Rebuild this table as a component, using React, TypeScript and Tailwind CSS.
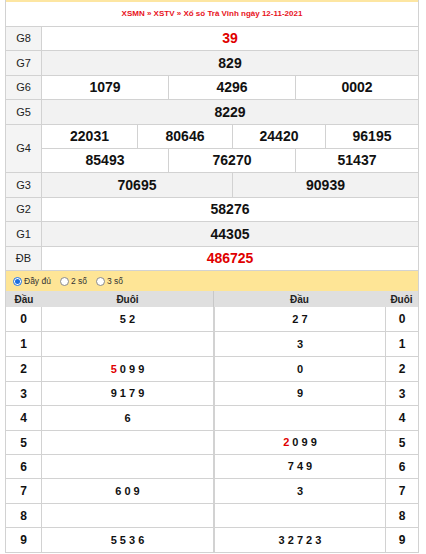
const rows: { label: string; h: string; gray: boolean; cols: string; nums: string[]; red?: boolean }[] = [
  { label: 'G8', h: 'h-[24px]', gray: false, cols: 'grid-cols-1', nums: ['39'], red: true },
  { label: 'G7', h: 'h-[25px]', gray: true, cols: 'grid-cols-1', nums: ['829'] },
  { label: 'G6', h: 'h-[24px]', gray: false, cols: 'grid-cols-[127px_127px_1fr]', nums: ['1079', '4296', '0002'] },
  { label: 'G5', h: 'h-[25px]', gray: true, cols: 'grid-cols-1', nums: ['8229'] },
];

const rowsBottom: { label: string; h: string; gray: boolean; cols: string; nums: string[]; red?: boolean }[] = [
  { label: 'G3', h: 'h-[25px]', gray: true, cols: 'grid-cols-[191px_1fr]', nums: ['70695', '90939'] },
  { label: 'G2', h: 'h-[24px]', gray: false, cols: 'grid-cols-1', nums: ['58276'] },
  { label: 'G1', h: 'h-[25px]', gray: true, cols: 'grid-cols-1', nums: ['44305'] },
  { label: 'ĐB', h: 'h-[24px]', gray: false, cols: 'grid-cols-1', nums: ['486725'], red: true },
];

// loto: [đầu -> đuôi], [đuôi -> đầu]; first digit red where marked
const loto: { h: string; left: string; leftRed?: string; right: string; rightRed?: string }[] = [
  { h: 'h-[25px]', left: '5 2', right: '2 7' },
  { h: 'h-[25px]', left: '', right: '3' },
  { h: 'h-[25px]', left: ' 0 9 9', leftRed: '5', right: '0' },
  { h: 'h-[24px]', left: '9 1 7 9', right: '9' },
  { h: 'h-[25px]', left: '6', right: '' },
  { h: 'h-[24px]', left: '', right: ' 0 9 9', rightRed: '2' },
  { h: 'h-[24px]', left: '', right: '7 4 9' },
  { h: 'h-[25px]', left: '6 0 9', right: '3' },
  { h: 'h-[24px]', left: '', right: '' },
  { h: 'h-[25px]', left: '5 5 3 6', right: '3 2 7 2 3' },
];

type Row = (typeof rows)[number];

const PrizeRow = ({ r }: { r: Row }) => (
  <div className={`flex ${r.h} border-b border-[#d2d2d2] ${r.gray ? 'bg-[#f2f2f2]' : 'bg-white'}`}>
    <div className="w-[36px] shrink-0 border-r border-[#d2d2d2] bg-[#f4f4f4] flex items-center justify-center text-[11px] text-[#222]">
      {r.label}
    </div>
    <div className={`flex-1 grid ${r.cols}`}>
      {r.nums.map((n, i) => (
        <div
          key={n}
          className={`flex items-center justify-center text-[14px] font-bold ${r.red ? 'text-[#e00000]' : 'text-[#111]'} ${
            i < r.nums.length - 1 ? 'border-r border-[#d2d2d2]' : ''
          }`}
        >
          {n}
        </div>
      ))}
    </div>
  </div>
);

const Radio = ({ on, label }: { on?: boolean; label: string }) => (
  <label className="flex items-center gap-[2px] mr-[9px]">
    <span
      className={`w-[9px] h-[9px] rounded-full border flex items-center justify-center bg-white ${
        on ? 'border-[#1c6fe0]' : 'border-[#8a8a8a]'
      }`}
    >
      {on && <span className="w-[5px] h-[5px] rounded-full bg-[#1c6fe0]" />}
    </span>
    <span className="text-[8.5px] text-[#333]">{label}</span>
  </label>
);

export default function App() {
  return (
    <div className="bg-white min-h-[554px]" style={{ fontFamily: '"Liberation Sans", Arial, sans-serif' }}>
      <div className="ml-[5px] w-[414px] border-x border-[#d2d2d2]">
        {/* title */}
        <div className="h-[27px] border-t-2 border-t-[#fde6a2] border-b border-[#d2d2d2] flex items-center justify-center">
          <span className="text-[8px] font-bold text-[#e8121c]">XSMN » XSTV » Xổ số Trà Vinh ngày 12-11-2021</span>
        </div>

        {rows.map((r) => (
          <PrizeRow key={r.label} r={r} />
        ))}

        {/* G4 */}
        <div className="flex h-[48px] bg-white">
          <div className="w-[36px] shrink-0 border-r border-b border-[#d2d2d2] bg-[#f4f4f4] flex items-center justify-center text-[11px] text-[#222]">
            G4
          </div>
          <div className="flex-1 flex flex-col">
            <div className="h-[24px] grid grid-cols-[96px_95px_93px_1fr] border-b border-[#d2d2d2]">
              {['22031', '80646', '24420', '96195'].map((n, i) => (
                <div key={n} className={`flex items-center justify-center text-[14px] font-bold text-[#111] ${i < 3 ? 'border-r border-[#d2d2d2]' : ''}`}>
                  {n}
                </div>
              ))}
            </div>
            <div className="h-[24px] grid grid-cols-[127px_127px_1fr] border-b border-[#d2d2d2]">
              {['85493', '76270', '51437'].map((n, i) => (
                <div key={n} className={`flex items-center justify-center text-[14px] font-bold text-[#111] ${i < 2 ? 'border-r border-[#d2d2d2]' : ''}`}>
                  {n}
                </div>
              ))}
            </div>
          </div>
        </div>

        {rowsBottom.map((r) => (
          <PrizeRow key={r.label} r={r} />
        ))}

        {/* options */}
        <div className="h-[20px] bg-[#fee596] flex items-center pl-[7px]">
          <Radio on label="Đầy đủ" />
          <Radio label="2 số" />
          <Radio label="3 số" />
        </div>

        {/* loto header */}
        <div className="h-[16px] bg-[#dfdfdf] flex text-[10px] font-bold text-[#222]">
          <div className="w-[208px] flex border-r border-[#c8c8c8]">
            <div className="w-[36px] flex items-center justify-center">Đầu</div>
            <div className="flex-1 flex items-center justify-center">Đuôi</div>
          </div>
          <div className="flex-1 flex">
            <div className="w-[171px] flex items-center justify-center">Đầu</div>
            <div className="flex-1 flex items-center justify-center">Đuôi</div>
          </div>
        </div>

        {loto.map((r, i) => (
          <div key={i} className={`flex ${r.h} text-[11px] font-bold text-[#111]`}>
            <div className="w-[208px] flex border-r border-b border-[#d2d2d2]">
              <div className="w-[36px] border-r border-[#d2d2d2] flex items-center justify-center text-[12px]">{i}</div>
              <div className="flex-1 flex items-center justify-center whitespace-pre">
                {r.leftRed && <span className="text-[#e00000]">{r.leftRed}</span>}
                {r.left}
              </div>
            </div>
            <div className="flex-1 flex border-l border-b border-[#d2d2d2]">
              <div className="w-[171px] border-r border-[#d2d2d2] flex items-center justify-center whitespace-pre">
                {r.rightRed && <span className="text-[#e00000]">{r.rightRed}</span>}
                {r.right}
              </div>
              <div className="flex-1 flex items-center justify-center text-[12px]">{i}</div>
            </div>
          </div>
        ))}
      </div>
    </div>
  );
}
